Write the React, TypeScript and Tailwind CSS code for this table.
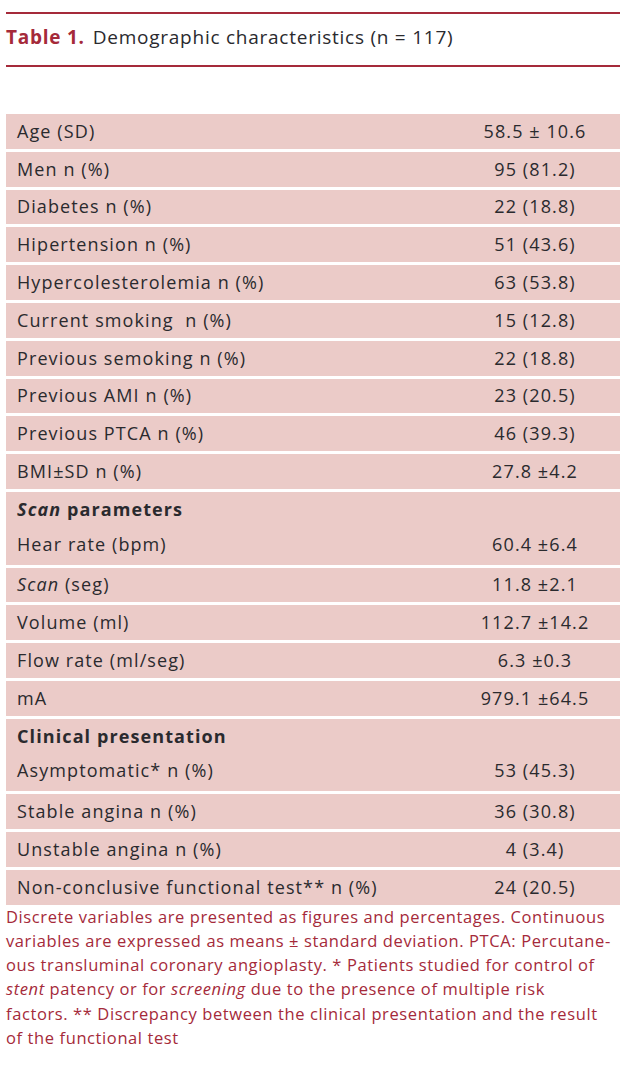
import React from 'react';

type Row = { label: React.ReactNode; value?: string; header?: boolean };

const groups: Row[][] = [
  [{ label: 'Age (SD)', value: '58.5 ± 10.6' }],
  [{ label: 'Men n (%)', value: '95 (81.2)' }],
  [{ label: 'Diabetes n (%)', value: '22 (18.8)' }],
  [{ label: 'Hipertension n (%)', value: '51 (43.6)' }],
  [{ label: 'Hypercolesterolemia n (%)', value: '63 (53.8)' }],
  [{ label: 'Current smoking\u00a0 n (%)', value: '15 (12.8)' }],
  [{ label: 'Previous semoking n (%)', value: '22 (18.8)' }],
  [{ label: 'Previous AMI n (%)', value: '23 (20.5)' }],
  [{ label: 'Previous PTCA n (%)', value: '46 (39.3)' }],
  [{ label: 'BMI±SD n (%)', value: '27.8 ±4.2' }],
  [
    { label: <><i>Scan</i> parameters</>, header: true },
    { label: 'Hear rate (bpm)', value: '60.4 ±6.4' },
  ],
  [{ label: <><i>Scan</i> (seg)</>, value: '11.8 ±2.1' }],
  [{ label: 'Volume (ml)', value: '112.7 ±14.2' }],
  [{ label: 'Flow rate (ml/seg)', value: '6.3 ±0.3' }],
  [{ label: 'mA', value: '979.1 ±64.5' }],
  [
    { label: 'Clinical presentation', header: true },
    { label: 'Asymptomatic* n (%)', value: '53 (45.3)' },
  ],
  [{ label: 'Stable angina n (%)', value: '36 (30.8)' }],
  [{ label: 'Unstable angina n (%)', value: '4 (3.4)' }],
  [{ label: 'Non-conclusive functional test** n (%)', value: '24 (20.5)' }],
];

export default function App() {
  return (
    <div
      className="w-[626px] h-[1070px] bg-white px-[6px] pt-[12px] text-[#2a2a2e]"
      style={{ fontFamily: '"Open Sans", "Noto Sans", sans-serif' }}
    >
      <div className="h-[2px] bg-[#a52a3a]" />
      <div className="h-[51px] flex items-center pb-[4px] text-[19px] tracking-[0.75px] whitespace-nowrap">
        <span className="font-bold text-[#a52a3a] mr-[8px]">Table 1.</span>
        <span>Demographic characteristics (n = 117)</span>
      </div>
      <div className="h-[2px] bg-[#a52a3a]" />

      <div className="mt-[47px] flex flex-col gap-[3px] text-[18px] tracking-[1.1px] whitespace-nowrap">
        {groups.map((g, i) => (
          <div key={i} className="bg-[#ebcbc8] flex flex-col">
            {g.map((r, j) => (
              <div
                key={j}
                className={`flex items-center ${j === 0 ? 'h-[34.8px]' : 'h-[37.8px] pb-[3px]'}`}
              >
                <div className={`flex-1 pl-[11px] ${r.header ? 'font-bold' : ''}`}>{r.label}</div>
                <div className="w-[170px] text-center">{r.value}</div>
              </div>
            ))}
          </div>
        ))}
      </div>

      <p className="text-[#a52a3a] text-[16.5px] leading-[24.2px] tracking-[0.6px] whitespace-nowrap">
        Discrete variables are presented as figures and percentages. Continuous
        <br />
        variables are expressed as means ± standard deviation. PTCA: Percutane-
        <br />
        ous transluminal coronary angioplasty. * Patients studied for control of
        <br />
        <i>stent</i> patency or for <i>screening</i> due to the presence of multiple risk
        <br />
        factors. ** Discrepancy between the clinical presentation and the result
        <br />
        of the functional test
      </p>
    </div>
  );
}
